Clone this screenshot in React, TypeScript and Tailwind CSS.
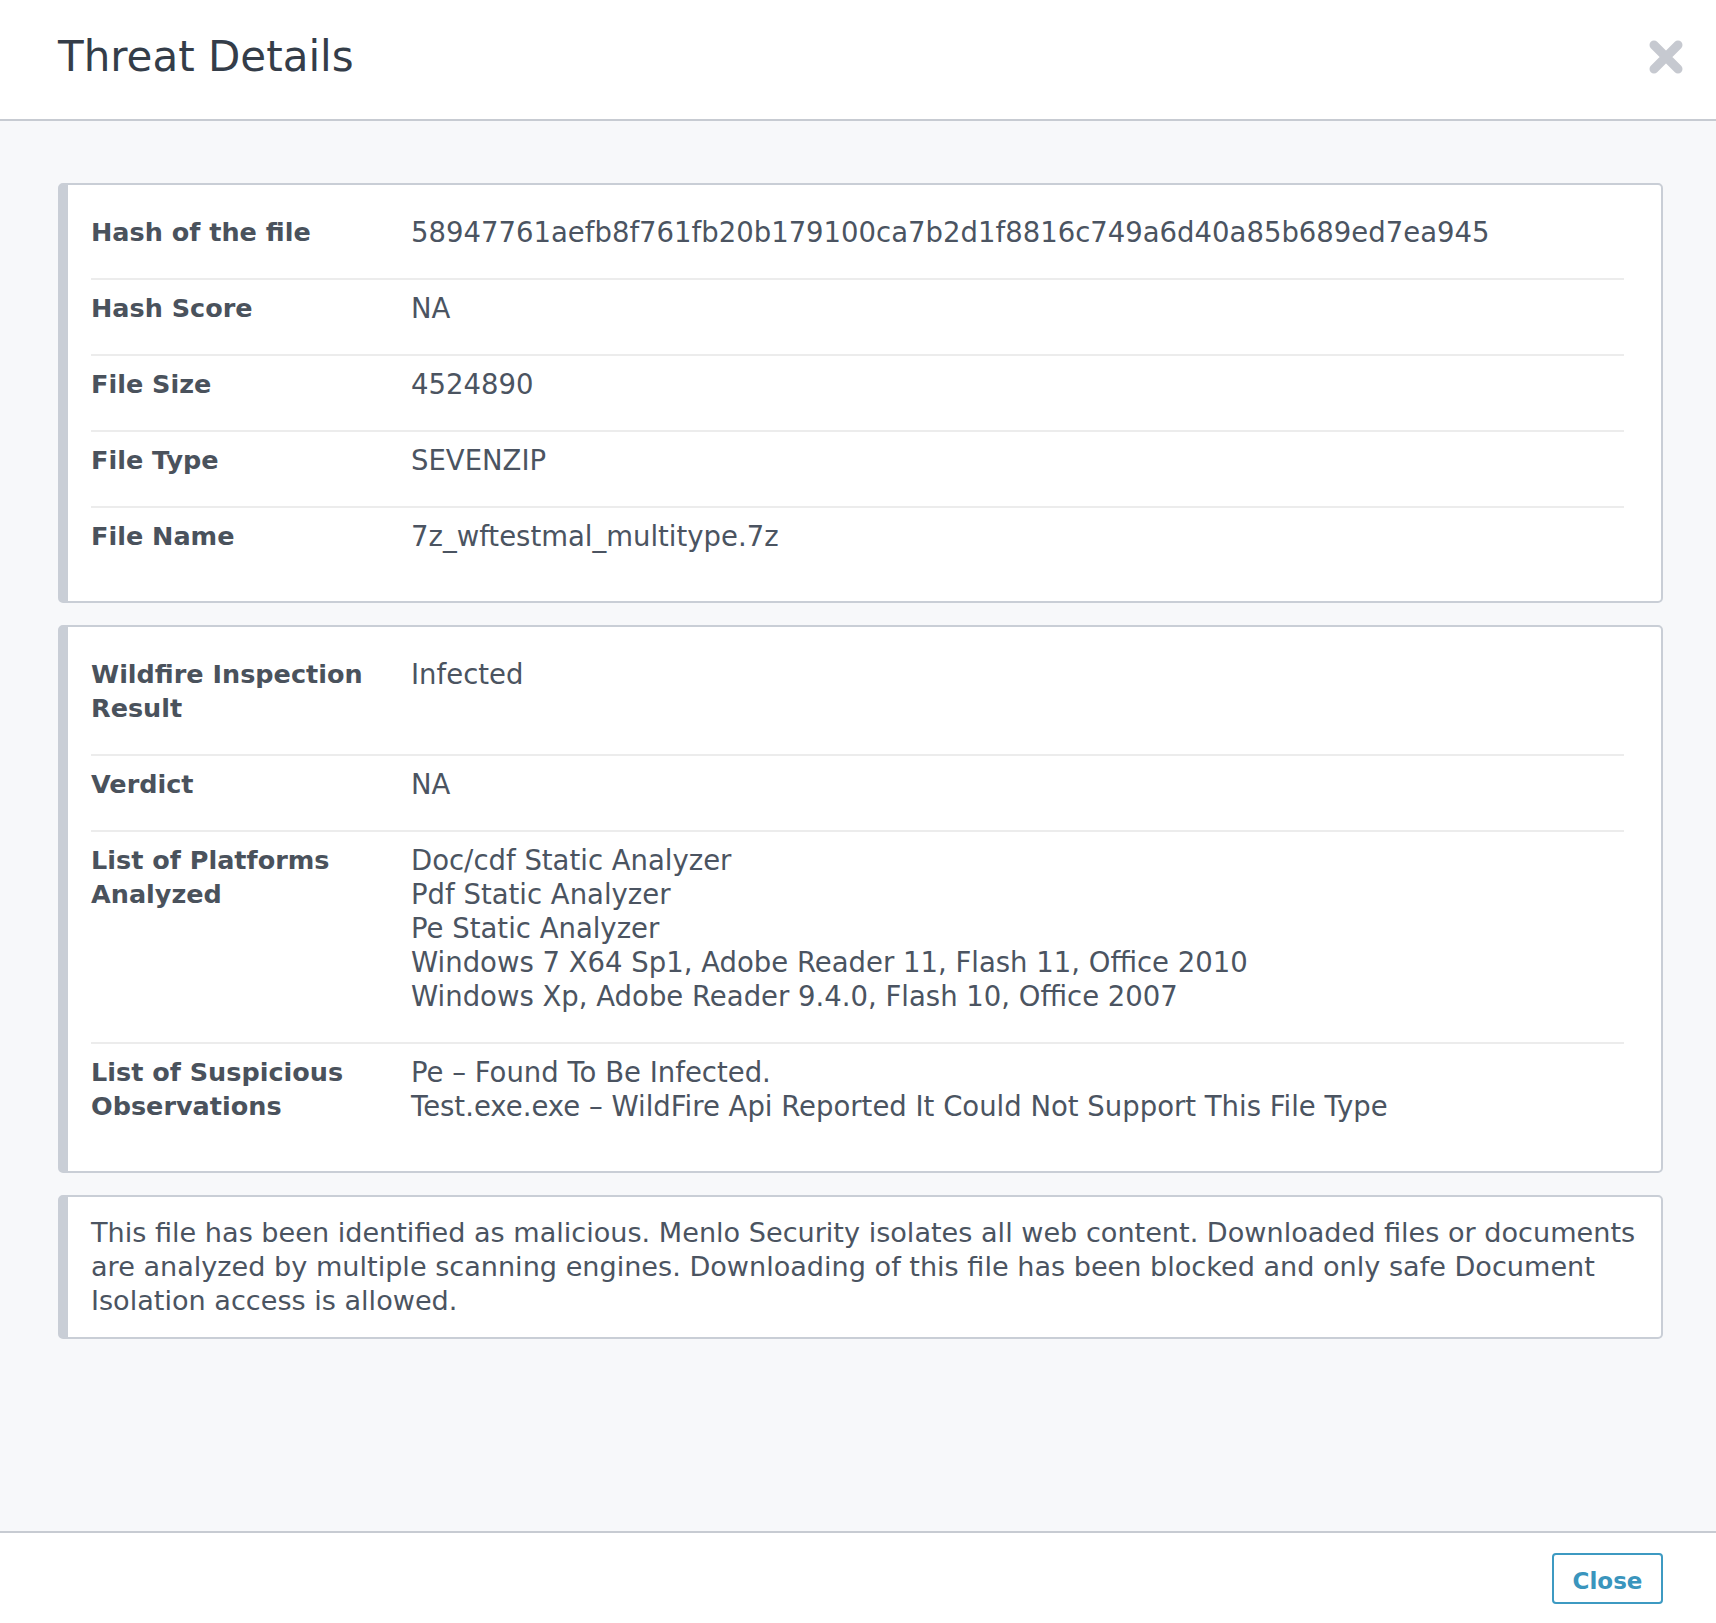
import React from "react";

type Row = { label: string; value: string[] };

const fileRows: Row[] = [
  { label: "Hash of the file", value: ["58947761aefb8f761fb20b179100ca7b2d1f8816c749a6d40a85b689ed7ea945"] },
  { label: "Hash Score", value: ["NA"] },
  { label: "File Size", value: ["4524890"] },
  { label: "File Type", value: ["SEVENZIP"] },
  { label: "File Name", value: ["7z_wftestmal_multitype.7z"] },
];

const wildfireRows: Row[] = [
  { label: "Wildfire Inspection Result", value: ["Infected"] },
  { label: "Verdict", value: ["NA"] },
  {
    label: "List of Platforms Analyzed",
    value: [
      "Doc/cdf Static Analyzer",
      "Pdf Static Analyzer",
      "Pe Static Analyzer",
      "Windows 7 X64 Sp1, Adobe Reader 11, Flash 11, Office 2010",
      "Windows Xp, Adobe Reader 9.4.0, Flash 10, Office 2007",
    ],
  },
  {
    label: "List of Suspicious Observations",
    value: [
      "Pe \u2013 Found To Be Infected.",
      "Test.exe.exe \u2013 WildFire Api Reported It Could Not Support This File Type",
    ],
  },
];

const Card = ({ children }: { children: React.ReactNode }) => (
  <div className="bg-white border-2 border-l-[10px] border-[#c9ced6] rounded-[5px] py-[19px] pl-[23px] pr-[20px]">
    {children}
  </div>
);

const DetailTable = ({ rows }: { rows: Row[] }) => (
  <div className="mr-[17px]">
    {rows.map((row, i) => (
      <div
        key={row.label}
        className={`grid grid-cols-[320px_1fr] pt-[11px] pb-[29px] ${i < rows.length - 1 ? "border-b-2 border-[#ececec]" : ""}`}
      >
        <div className="pr-[24px] font-bold text-[25.5px] text-[#4a525c]">{row.label}</div>
        <div className="text-[#4b5461]">
          {row.value.map((v) => (
            <div key={v} className="whitespace-nowrap">{v}</div>
          ))}
        </div>
      </div>
    ))}
  </div>
);

const App = () => {
  return (
    <div className="h-[1623px] flex flex-col bg-white font-['DejaVu_Sans',sans-serif] text-[27.5px] leading-[34px]">
      {/* Header */}
      <header className="h-[121px] shrink-0 flex items-center justify-between pl-[58px] pr-[32px] pb-[6px] border-b-2 border-[#c7cbd2]">
        <h1 className="text-[42px] leading-[50px] text-[#343d49]">Threat Details</h1>
        <button className="w-[36px] h-[36px]" aria-label="close">
          <svg viewBox="0 0 36 36" className="w-[36px] h-[36px]">
            <path d="M6 6 L30 30 M30 6 L6 30" stroke="#c6c9d0" strokeWidth="9" strokeLinecap="round" />
          </svg>
        </button>
      </header>

      {/* Body */}
      <main className="flex-1 bg-[#f7f8fa] pt-[62px] pl-[58px] pr-[53px] flex flex-col gap-[22px]">
        <Card>
          <DetailTable rows={fileRows} />
        </Card>
        <Card>
          <DetailTable rows={wildfireRows} />
        </Card>
        <Card>
          <p className="text-[#4b5461] text-[27.1px]">
            <span className="block whitespace-nowrap">
              This file has been identified as malicious. Menlo Security isolates all web content. Downloaded files or documents
            </span>
            <span className="block whitespace-nowrap">
              are analyzed by multiple scanning engines. Downloading of this file has been blocked and only safe Document
            </span>
            <span className="block whitespace-nowrap">Isolation access is allowed.</span>
          </p>
        </Card>
      </main>

      {/* Footer */}
      <footer className="h-[92px] shrink-0 border-t-2 border-[#c7cbd2] flex justify-end items-start pt-[20px] pr-[53px]">
        <button className="w-[111px] h-[51px] pt-[5px] border-2 border-[#3d9ac2] rounded-[4px] text-[23px] font-bold text-[#3a95bd] leading-none">
          Close
        </button>
      </footer>
    </div>
  );
};

export default App;
